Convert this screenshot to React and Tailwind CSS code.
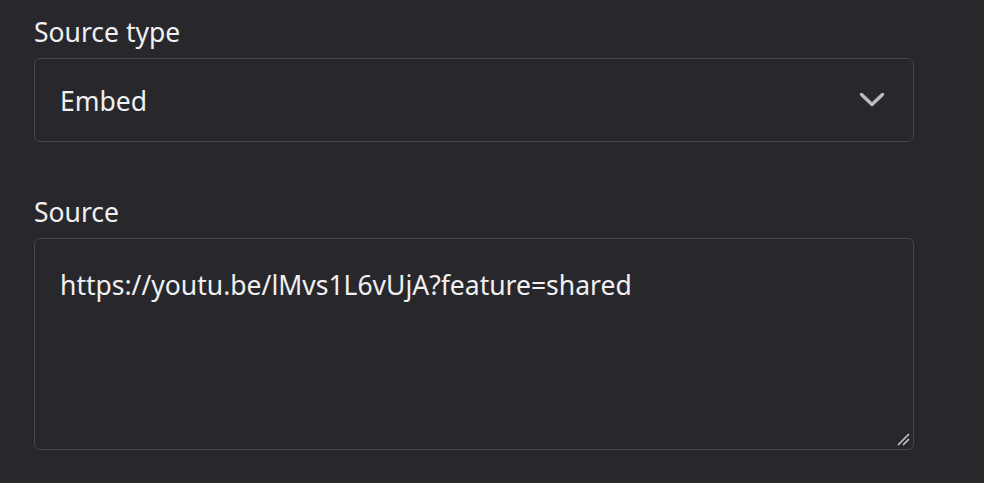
export default function App() {
  return (
    <div className="min-h-screen w-full bg-[#28282c] text-[#f0f0f2] font-['Noto_Sans',sans-serif] pl-[34px] pt-[14px]">
      <div className="w-[880px] flex flex-col">
        {/* Source type */}
        <label className="text-[26.5px] leading-[36px]">Source type</label>
        <div className="mt-[8px] h-[84px] rounded-[6px] border border-[#46464b] flex items-center justify-between pl-[25px] pr-[28px]">
          <span className="text-[26.5px] pt-[3px]">Embed</span>
          <svg width="26" height="16" viewBox="0 0 26 16" fill="none" className="text-[#b9bbc0]">
            <polyline points="2.5,2.5 13,12.5 23.5,2.5" stroke="currentColor" strokeWidth="3.5" strokeLinecap="round" strokeLinejoin="round" />
          </svg>
        </div>

        {/* Source */}
        <label className="mt-[52px] text-[26.5px] leading-[36px]">Source</label>
        <div className="relative mt-[8px]">
          <textarea
            className="block w-full h-[212px] rounded-[6px] border border-[#46464b] bg-transparent px-[25px] pt-[30px] text-[26.5px] leading-[32px] text-[#f0f0f2] outline-none resize-none"
            defaultValue="https://youtu.be/lMvs1L6vUjA?feature=shared"
          />
          {/* resize grip */}
          <svg width="14" height="14" viewBox="0 0 14 14" className="absolute right-[4px] bottom-[4px] pointer-events-none">
            <line x1="2" y1="13" x2="13" y2="2" stroke="#1a1a1c" strokeWidth="3.5" />
            <line x1="7" y1="13" x2="13" y2="7" stroke="#1a1a1c" strokeWidth="3.5" />
            <line x1="2" y1="13" x2="13" y2="2" stroke="#b4b4b8" strokeWidth="1.8" />
            <line x1="7" y1="13" x2="13" y2="7" stroke="#b4b4b8" strokeWidth="1.8" />
          </svg>
        </div>
      </div>
    </div>
  );
}
